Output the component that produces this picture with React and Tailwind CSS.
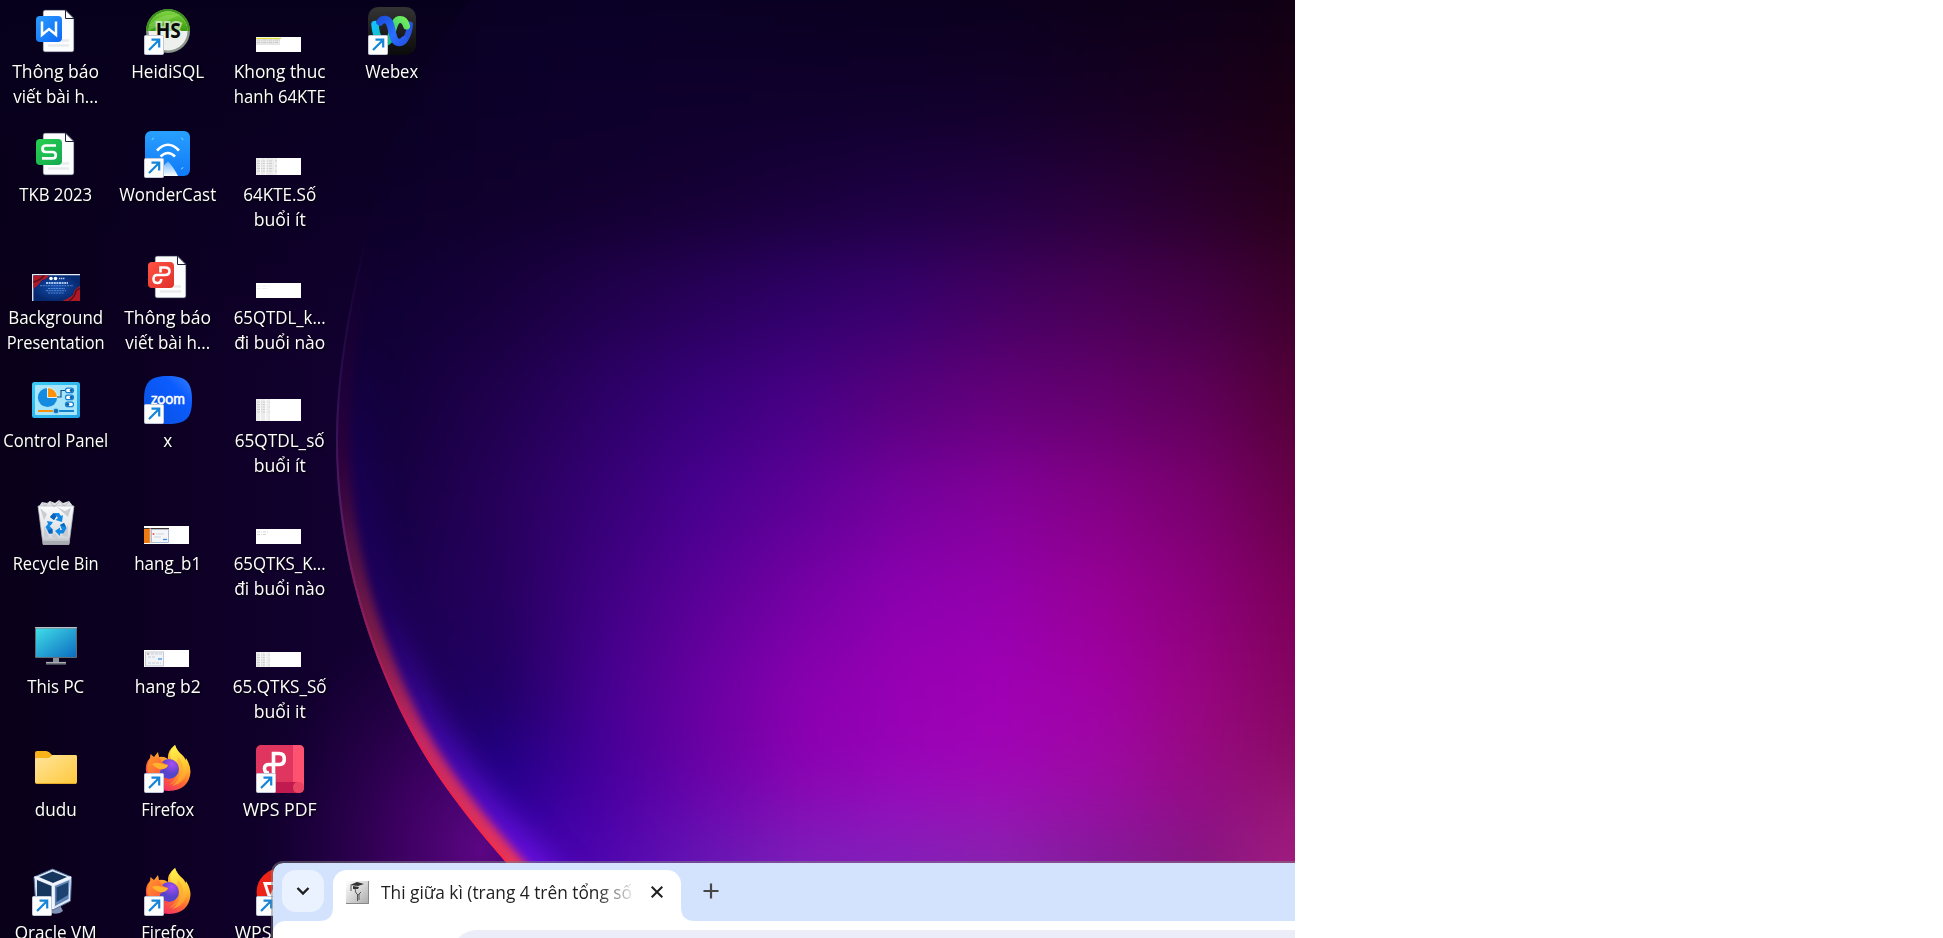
import React from "react";

/* Wallpaper colours: one row per height, one colour per horizontal position. */
const XS = [336, 400, 500, 600, 700, 800, 900, 1000, 1100, 1200, 1295];
const ROWS = [
  [0, ["#07001c", "#08001e", "#0a0024", "#0a0026", "#0a0024", "#0a0022", "#0a001f", "#0b001e", "#0c001a", "#0e0018", "#100014"]],
  [100, ["#090020", "#0a0023", "#0c002a", "#0d002c", "#0e002c", "#0f002c", "#10002c", "#12002a", "#150024", "#18001e", "#1a0014"]],
  [200, ["#0c0026", "#0d0029", "#0f002c", "#12002f", "#150034", "#19003c", "#1d0042", "#220042", "#28003a", "#28002a", "#26001a"]],
  [300, ["#100032", "#100034", "#17003c", "#20004c", "#28005a", "#2f0068", "#38006e", "#430062", "#480056", "#440046", "#3c002c"]],
  [400, ["#120040", "#14003c", "#20004e", "#2c0066", "#38007c", "#480086", "#58007e", "#64007a", "#64006e", "#60005a", "#540038"]],
  [500, ["#160050", "#180044", "#26005a", "#360076", "#480090", "#5e0098", "#76009e", "#84009a", "#840086", "#7a006e", "#680048"]],
  [600, ["#1a0058", "#1a0050", "#26005e", "#3e0082", "#5a0098", "#7600a4", "#8c00b0", "#9400ac", "#980096", "#8c007c", "#7c0058"]],
  [690, ["#1c0058", "#1c0058", "#200062", "#44008e", "#6800a0", "#8800b0", "#9800b4", "#a000b4", "#a000a4", "#980480", "#840460"]],
  [760, ["#200068", "#200068", "#200084", "#440098", "#6800a4", "#8a00b0", "#9802b8", "#a004b4", "#9e08a4", "#960a80", "#8a0c64"]],
  [820, ["#300080", "#300080", "#2c009c", "#4800a8", "#6808b0", "#8410b8", "#9214bc", "#9814b4", "#9410a0", "#900e88", "#981878"]],
  [862, ["#4008a8", "#4008a8", "#4404b4", "#5006b0", "#6418b4", "#7a20b8", "#8020b8", "#8424ac", "#801c98", "#841880", "#a41c80"]],
];

const EDGE = "M368 225 C350 300 336 370 336 440 C336 550 367 644 405 720 C435 780 480 835 545 906";

function Wallpaper() {
  return (
    <svg className="block h-full w-full" viewBox="0 0 1295 938" preserveAspectRatio="none">
      <defs>
        {ROWS.map(([y, cols]) => (
          <linearGradient key={y} id={`row${y}`} gradientUnits="userSpaceOnUse" x1="336" y1="0" x2="1295" y2="0">
            {cols.map((c, i) => <stop key={i} offset={(XS[i] - 336) / 959} stopColor={c} />)}
          </linearGradient>
        ))}
        <filter id="soft" x="-10%" y="-20%" width="120%" height="140%" colorInterpolationFilters="sRGB"><feGaussianBlur stdDeviation="12 36" /></filter>
        <filter id="b3" filterUnits="userSpaceOnUse" x="200" y="100" width="600" height="900" colorInterpolationFilters="sRGB"><feGaussianBlur stdDeviation="4" /></filter>
        <filter id="b12" filterUnits="userSpaceOnUse" x="200" y="100" width="600" height="900" colorInterpolationFilters="sRGB"><feGaussianBlur stdDeviation="14" /></filter>
        <linearGradient id="left" gradientUnits="userSpaceOnUse" x1="0" y1="0" x2="345" y2="0">
          <stop offset="0" stopColor="#090019" /><stop offset=".5" stopColor="#0d0024" /><stop offset="1" stopColor="#120030" />
        </linearGradient>
        <linearGradient id="leftTop" x1="0" y1="0" x2="0" y2="1">
          <stop offset="0" stopColor="#07001c" /><stop offset=".4" stopColor="#07001c" stopOpacity="0" />
        </linearGradient>
        <radialGradient id="glow" gradientUnits="userSpaceOnUse" cx="0" cy="0" r="1" gradientTransform="translate(480 850) scale(220 260)">
          <stop offset="0" stopColor="#5c0684" /><stop offset=".4" stopColor="#44006a" stopOpacity=".8" /><stop offset="1" stopColor="#2c0050" stopOpacity="0" />
        </radialGradient>
        <linearGradient id="rim" gradientUnits="userSpaceOnUse" x1="0" y1="230" x2="0" y2="864">
          <stop offset="0" stopColor="#241048" stopOpacity="0" /><stop offset=".25" stopColor="#2a0e50" /><stop offset=".45" stopColor="#541c64" /><stop offset=".65" stopColor="#9c1c58" /><stop offset=".8" stopColor="#e01c50" /><stop offset="1" stopColor="#fb2a40" />
        </linearGradient>
        <linearGradient id="band" gradientUnits="userSpaceOnUse" x1="0" y1="230" x2="0" y2="864">
          <stop offset="0" stopColor="#200030" stopOpacity="0" /><stop offset=".35" stopColor="#380030" stopOpacity=".6" /><stop offset=".5" stopColor="#601440" stopOpacity=".8" /><stop offset=".65" stopColor="#801c48" /><stop offset=".8" stopColor="#c42860" /><stop offset="1" stopColor="#e83458" />
        </linearGradient>
        <linearGradient id="halo" gradientUnits="userSpaceOnUse" x1="0" y1="350" x2="0" y2="864">
          <stop offset="0" stopColor="#140050" stopOpacity="0" /><stop offset=".5" stopColor="#200060" /><stop offset=".75" stopColor="#4008a8" /><stop offset="1" stopColor="#6a10e0" />
        </linearGradient>
        <clipPath id="disc"><path d="M470 0 C400 90 380 180 368 225 C350 300 336 370 336 440 C336 550 367 644 405 720 C435 780 480 835 545 906 L574 938 H1295 V0 Z" /></clipPath>
      </defs>
      <rect width="1295" height="938" fill="url(#left)" />
      <rect width="1295" height="938" fill="url(#leftTop)" />
      <rect x="230" y="580" width="400" height="358" fill="url(#glow)" />
      <g clipPath="url(#disc)">
        <g filter="url(#soft)">
          {ROWS.map(([y], i) => {
            const top = i === 0 ? -150 : (ROWS[i - 1][0] + y) / 2;
            const bottom = i === ROWS.length - 1 ? 1080 : (ROWS[i + 1][0] + y) / 2;
            return <rect key={y} x="200" y={top} width="1220" height={bottom - top + 0.5} fill={`url(#row${y})`} />;
          })}
        </g>
        <path d={EDGE} fill="none" stroke="url(#halo)" strokeWidth="68" filter="url(#b12)" />
        <path d={EDGE} fill="none" stroke="url(#band)" strokeWidth="28" filter="url(#b3)" />
        <path d={EDGE} fill="none" stroke="url(#rim)" strokeWidth="4" />
      </g>
    </svg>
  );
}

const Shortcut = () => (
  <g>
    <rect x="0.5" y="28.5" width="19" height="19" rx="1" fill="#fdfdfe" stroke="#c3c9d8" />
    <path d="M5 43 L14.5 33.5 M7.5 32.7 H15.2 V40.5" fill="none" stroke="#1485d8" strokeWidth="2.2" />
  </g>
);

const Svg = ({ children }) => <svg className="block h-12 w-12" viewBox="0 0 48 48">{children}</svg>;

function Page({ color, color2, id, children }) {
  return (
    <Svg>
      <defs><linearGradient id={id} x1="0" y1="0" x2="1" y2="1"><stop stopColor={color} /><stop offset="1" stopColor={color2} /></linearGradient></defs>
      <path d="M13 3 H34 L42 11 V43 a2 2 0 0 1 -2 2 H13 a2 2 0 0 1 -2 -2 V5 a2 2 0 0 1 2 -2z" fill="#fcfdfe" stroke="#2a2d48" strokeWidth=".7" />
      <path d="M33.5 3 V11.5 H42z" fill="#fff" stroke="#1c2038" strokeWidth="1" />
      <path d="M16 38.5 H37 M30 33.5 H37" stroke="#e8eaee" strokeWidth="2.6" />
      <rect x="4" y="9" width="26" height="26" rx="4" fill={`url(#${id})`} />
      {children}
    </Svg>
  );
}

const WordDoc = () => <Page id="wd" color="#2a9cff" color2="#0d68f6"><path d="M10 14.5 V27.8 L17 22 L24 27.8 V14.5" fill="none" stroke="#fff" strokeWidth="2.5" /></Page>;
const SheetDoc = () => <Page id="sd" color="#26d050" color2="#15a850"><path d="M24 15.5 H14 Q10.5 15.5 10.5 18.7 Q10.5 22 14 22 H20.5 Q23.8 22 23.8 25.2 Q23.8 28.4 20.5 28.4 H10" fill="none" stroke="#fff" strokeWidth="2.7" /></Page>;
const PdfDoc = () => <Page id="pd" color="#ff5344" color2="#df3029"><path d="M16.5 19.5 V14.5 H21 Q25.5 14.5 25.5 18.3 Q25.5 22 21 22 H13 Q9.5 22 9.5 26 Q9.5 30 13.5 30 Q17.2 30 17.2 26" fill="none" stroke="#fff" strokeWidth="2.6" /></Page>;

const Heidi = () => (
  <Svg>
    <defs><linearGradient id="hg" x1="0" y1="0" x2="0" y2="1"><stop stopColor="#7bd33c" /><stop offset="1" stopColor="#399911" /></linearGradient></defs>
    <circle cx="24" cy="24" r="22" fill="#8b958c" />
    <path d="M2 24 A22 22 0 0 1 46 24z" fill="#3b9415" />
    <circle cx="24" cy="24" r="19.5" fill="#edf0ed" />
    <path d="M4.5 24 A19.5 19.5 0 0 1 43.5 24z" fill="url(#hg)" />
    <path d="M6 17 Q17 6 35 8 Q22 14 4.5 24z" fill="#a5e36d" opacity=".4" />
    <text x="24.3" y="31.3" textAnchor="middle" textLength="25" lengthAdjust="spacingAndGlyphs" fontFamily="Open Sans, sans-serif" fontSize="21.5" fontWeight="700" fill="#0a0a0a" stroke="#e9f2e4" strokeOpacity=".7" strokeWidth="4" paintOrder="stroke">HS</text>
    <Shortcut />
  </Svg>
);

const WonderCast = () => (
  <Svg>
    <defs>
      <linearGradient id="wc" x1="0" y1="0" x2="0" y2="1"><stop stopColor="#27a0ff" /><stop offset="1" stopColor="#1179f8" /></linearGradient>
      <linearGradient id="wc2" x1="0" y1="0" x2="0" y2="1"><stop stopColor="#69b4ff" /><stop offset="1" stopColor="#fff" /></linearGradient>
    </defs>
    <rect x="1" y="1" width="45" height="45" rx="6" fill="url(#wc)" />
    <path d="M13 20.5 Q24 9 35 20.5 M16.5 26.5 Q24 19.5 31 26.5" fill="none" stroke="#fff" strokeWidth="2.6" />
    <path d="M24 31.5 Q29 36 34 46 H14 Q18 36 24 31.5z" fill="url(#wc2)" />
    <path d="M8 10 q0-2 2-2 M37 8 q2 0 2 2 M39 37 q0 2-2 2" fill="none" stroke="#8acbff" />
    <Shortcut />
  </Svg>
);

const Webex = () => (
  <Svg>
    <defs>
      <linearGradient id="wx" x1="0" y1="0" x2="0" y2="1"><stop stopColor="#343434" /><stop offset="1" stopColor="#0a0a0a" /></linearGradient>
      <linearGradient id="wx1" x1="0" y1="0" x2="1" y2="1"><stop stopColor="#12c3fa" /><stop offset="1" stopColor="#12b890" /></linearGradient>
      <linearGradient id="wx2" x1="0" y1="1" x2="1" y2="0"><stop stopColor="#0cb58c" /><stop offset="1" stopColor="#72ef5c" /></linearGradient>
      <linearGradient id="wx3" x1="0" y1="0" x2="1" y2="1"><stop stopColor="#1b50df" /><stop offset=".6" stopColor="#2b70ff" /><stop offset="1" stopColor="#2457e8" /></linearGradient>
    </defs>
    <rect width="48" height="48" rx="10" fill="url(#wx)" />
    <path d="M42 17.5 C41 28 37 35.5 31.5 35.5" fill="none" stroke="#2453dd" strokeWidth="6" strokeLinecap="round" />
    <path d="M17 35.5 C26 35.5 23 12.5 32 12.5 Q37 12.5 38.5 19" fill="none" stroke="url(#wx2)" strokeWidth="7" strokeLinecap="round" />
    <path d="M7 17.5 C8 28 11 35.5 17 35.5" fill="none" stroke="url(#wx1)" strokeWidth="7.5" strokeLinecap="round" />
    <path d="M12 15 Q14 12 17.5 12.5 C26 14 22 35.5 31 35.5 Q34 35.5 36 33" fill="none" stroke="url(#wx3)" strokeWidth="7.5" strokeLinecap="round" />
    <Shortcut />
  </Svg>
);

const Presentation = () => (
  <Svg>
    <defs><radialGradient id="bp"><stop stopColor="#1450b0" /><stop offset="1" stopColor="#06286e" /></radialGradient></defs>
    <g transform="translate(0 2)">
      <rect y="19" width="48" height="27" fill="url(#bp)" />
      <path d="M0.7 46 V19.7 H48" fill="none" stroke="#e8edf5" strokeWidth="1.3" />
      <path d="M1.4 20.4 H17 Q15 24 10 25 Q7 30 1.4 34z M48 31 Q42 34 41 40 Q36 44 30 46 H48z" fill="#b01825" />
      <path d="M1.4 27 Q9 25 12 20.4 M37 46 Q43 42 44 36 L48 33" stroke="#5d0d1d" fill="none" strokeWidth="1.5" />
      <circle cx="19" cy="23.5" r="1.8" fill="#fff" /><circle cx="23.5" cy="23.5" r="1.8" fill="#fff" />
      <path d="M27 23.5 H33" stroke="#b9d1f4" strokeWidth="1.6" strokeDasharray="1.4 .6" />
      <path d="M14 28 H36" stroke="#a9c6f0" strokeWidth="1.8" strokeDasharray="2 .6" />
      <path d="M8 30.7 H41 M16 33.5 H33 M14 35.7 H34 M16 38 H32" stroke="#6a98de" strokeWidth=".8" strokeDasharray="2 .7" />
    </g>
  </Svg>
);

const ControlPanel = () => (
  <Svg>
    <defs><linearGradient id="cp" x1="0" y1="0" x2="1" y2="1"><stop stopColor="#3ccbf5" /><stop offset="1" stopColor="#20a4e6" /></linearGradient></defs>
    <rect y="6" width="48" height="36" rx="2.5" fill="url(#cp)" />
    <rect x="3" y="9" width="42" height="30" rx="1" fill="#a6e5fa" />
    <circle cx="15.5" cy="21.5" r="9.6" fill="#148be0" />
    <path d="M15.5 21.5 V11.5 A10 10 0 0 1 25.5 21.5z" fill="#ff920b" stroke="#d9f5fc" strokeWidth="1" />
    <path d="M25 21 H29 V14.5 H34" fill="none" stroke="#14538e" strokeWidth="1.2" />
    <g fill="#fff" stroke="#1680d0" strokeWidth="1.2"><rect x="33.5" y="12.2" width="8" height="4.4" rx="2.2" /><rect x="33.5" y="19.2" width="8" height="4.4" rx="2.2" /><rect x="33.5" y="26.2" width="8" height="4.4" rx="2.2" /></g>
    <circle cx="39.4" cy="14.4" r="1.7" fill="#0966ad" /><circle cx="39.4" cy="21.4" r="1.7" fill="#0966ad" /><circle cx="35.6" cy="28.4" r="1.7" fill="#0966ad" />
    <path d="M6 35 H23" stroke="#f4900b" strokeWidth="2" /><path d="M24 35 H42" stroke="#1583cf" strokeWidth="2" />
    <circle cx="24" cy="35" r="2.8" fill="#1470bb" stroke="#8ed9f5" />
  </Svg>
);

const Zoom = () => (
  <Svg>
    <defs><linearGradient id="zm" x1="1" y1="0" x2="0" y2="1"><stop stopColor="#3a7fff" /><stop offset=".3" stopColor="#0b5cff" /><stop offset="1" stopColor="#0a50dc" /></linearGradient></defs>
    <path d="M24 0 C42 0 48 6 48 24 C48 42 42 48 24 48 C6 48 0 42 0 24 C0 6 6 0 24 0z" fill="url(#zm)" />
    <text x="24" y="28" textAnchor="middle" textLength="34" lengthAdjust="spacingAndGlyphs" fontFamily="Lato, sans-serif" fontWeight="400" fontSize="15" fill="#fff" stroke="#fff" strokeWidth=".5">zoom</text>
    <Shortcut />
  </Svg>
);

const Bin = () => (
  <Svg>
    <defs><linearGradient id="rb" x1="0" y1="0" x2="0" y2="1"><stop stopColor="#fafbfc" /><stop offset=".8" stopColor="#d8dbdf" /><stop offset="1" stopColor="#a9adb1" /></linearGradient></defs>
    <path d="M7 7 L10 3 L15 4 L18 2 L23 4 L27 1 L31 4 L37 2 L41 7 L37 10 H11z" fill="#dddfe3" />
    <path d="M6 7 H42 L37 45.5 H11z" fill="url(#rb)" stroke="#b6babf" strokeWidth=".7" />
    <path d="M8 9 L15 15 L12 21z M25 8 L33 12 L39 9 L36 18z M12 27 L17 38 L12 39z M36 26 L30 37 L36 38z M19 37 L23 34 L28 42z" fill="#c9cdd2" />
    <path d="M10 3 L13 7 L18 2 L22 8 L28 2 L32 7 L37 3" fill="none" stroke="#aeb3b9" strokeWidth=".8" />
    <path d="M11 42 H37.5 L37 45.5 H11.3z" fill="#a8acb0" />
    <g fill="#1288e4">
      <path d="M18 18 L20.5 15 Q22 13.5 24 14 H27 L29 17 L31 16 L30 23 L23.5 21 L26 19 L24.5 17 L22 21z" />
      <path d="M15 22 L21 23 L19 26 L17.5 27 L20.5 30 V34.5 H17 L13.5 28 L16 25z" />
      <path d="M28 26 L32 24 L34.5 29 L31.5 34.5 H28 V37 L23 32 L28 28.5 V31 H30z" />
    </g>
    <path d="M18 18 L22 21 L24.5 17 L21.5 14z M16 31 L20.5 30 V34.5 H17z M28 26 L32 24 L34 28z" fill="#0c62b8" />
  </Svg>
);

const ThisPC = () => (
  <Svg>
    <defs><linearGradient id="pc" x1="0" y1="0" x2="1" y2="1"><stop stopColor="#3fdde8" /><stop offset="1" stopColor="#0d6cc0" /></linearGradient></defs>
    <rect x="3" y="5" width="42" height="31" rx="1" fill="#646a70" />
    <rect x="4" y="6.5" width="40" height="28.5" fill="url(#pc)" />
    <path d="M3.2 5.6 H44.8" stroke="#bbc2c7" strokeWidth="1.2" />
    <path d="M21 36 H27 V40 H21z" fill="#8a9198" /><path d="M14 40 H34 V42.6 H14z" fill="#6e757b" /><path d="M14 40.4 H34" stroke="#aeb4b9" />
  </Svg>
);

const Folder = () => (
  <Svg>
    <defs><linearGradient id="fd" x1="0" y1="0" x2="1" y2="1"><stop stopColor="#ffe49b" /><stop offset="1" stopColor="#ffc93c" /></linearGradient></defs>
    <path d="M3 36 V8 Q3 6 5 6 H14 Q16 6 17.5 7.5 L20 10 H43 Q45 10 45 12 V30z" fill="#f8b31b" />
    <path d="M3 15 Q3 13 5 13 H15.5 Q17.5 13 19 11.5 L20.5 10 H43.5 Q45 10 45 12 V37 Q45 39 43 39 H5 Q3 39 3 37z" fill="url(#fd)" />
    <path d="M4 38.5 H44" stroke="#e6ac26" />
  </Svg>
);

const Firefox = () => (
  <Svg>
    <defs>
      <linearGradient id="ff" x1=".85" y1="0" x2=".25" y2="1"><stop stopColor="#fff44f" /><stop offset=".3" stopColor="#ffc12c" /><stop offset=".6" stopColor="#ff6d30" /><stop offset="1" stopColor="#f01f72" /></linearGradient>
      <radialGradient id="ff2" cx=".65" cy=".25"><stop stopColor="#a94df2" /><stop offset="1" stopColor="#5644cb" /></radialGradient>
      <linearGradient id="ff3" x1="0" y1="0" x2="1" y2="1"><stop stopColor="#ff9a25" /><stop offset="1" stopColor="#ff3d4b" /></linearGradient>
      <linearGradient id="ff4" x1=".4" y1="0" x2=".6" y2="1"><stop stopColor="#fff04c" /><stop offset=".55" stopColor="#ffc933" /><stop offset="1" stopColor="#ff8a30" /></linearGradient>
    </defs>
    <path d="M31 0 Q33 6 38 10 Q41 12 41.5 15 L42 13 Q46.5 20 46.5 27 Q45 45 25 46 Q4 45 2 26 Q1 18 6 13 L6.5 9 L10 12 L14 7 L15 12 Q20 11 24 14 Q23 6 31 0z" fill="url(#ff)" />
    <path d="M31 0 Q33 6 38 10 Q45 18 43 28 Q39 39 28 41 Q38 34 35 23 Q33 16 27 14 Q24 7 31 0z" fill="url(#ff4)" />
    <path d="M34 12 Q42 20 38 30 Q34 38 25 40 Q35 33 32 22z" fill="#ffa02e" opacity=".5" />
    <circle cx="25" cy="24" r="10" fill="url(#ff2)" />
    <path d="M15 12 L17 16 Q20 19 24 20 Q23 23 19 24 Q15 25 16 29 Q18 33 24 34 Q21 37 15 37 Q6 34 3 24 Q4 16 7 13 Q11 13 15 12z" fill="url(#ff3)" />
    <path d="M8 19 Q13 17 17 18.5 L24 20 Q23 23.5 19 24 Q13 25 8 19z" fill="#ffb42b" />
    <Shortcut />
  </Svg>
);

const WpsPdf = () => (
  <Svg>
    <rect width="48" height="48" rx="5" fill="#e0355f" />
    <path d="M37 0 H43 Q48 0 48 5 V42 H37z" fill="#ff5170" />
    <path d="M0 37 H42 V48 H5 Q0 48 0 43z" fill="#c11a50" />
    <path d="M42 37 Q48 37 48 42.5 Q48 48 42.5 48 Q37 48 37 42.5 Q37 37 42 37z" fill="#e94463" />
    <path d="M17.5 29 V8.5 H23 Q28.3 8.5 28.3 14 Q28.3 19.5 23 19.5 H13 Q8.5 19.5 8.5 23.5 Q8.5 28 13 28" fill="none" stroke="#fff" strokeWidth="3.6" />
    <Shortcut />
  </Svg>
);

const WpsOffice = () => (
  <Svg>
    <circle cx="24" cy="24" r="23.5" fill="#ee2419" />
    <path d="M9 15.5 L14 31 L20 18 L25 31 L32 15.5z" fill="none" stroke="#fff" strokeWidth="3" />
    <Shortcut />
  </Svg>
);

const VBox = () => (
  <Svg>
    <path d="M23 34 Q30 34 29 39 L31 43 Q27 47 19 45z" fill="#8093b7" />
    <path d="M2 9 L20.5 1 L39.5 9 L38.5 33 L21 42 L3.5 33z" fill="#dce6f4" stroke="#4f6b99" strokeWidth="1" />
    <path d="M7 9 L20.5 3.5 L35 9 L21 15z M5 12 L19.5 18 V38 L5 30.5z" fill="#17365e" />
    <path d="M23 18 L37.5 12 L36.5 31 L23 38z" fill="#5d82b4" />
    <path d="M24.5 19.5 L36 14.5 V27 L24.5 34z" fill="#1d4170" />
    <path d="M2.5 9 L21 16.5 L39 9 M21 16.5 V41" stroke="#f1f6fc" strokeWidth="2" fill="none" />
    <Shortcut />
  </Svg>
);

/* Picture-file previews: white sheets with faint table marks at the left. */
function Sheet({ h, w, top, color = "#b4b4b4", accent, dense }) {
  return (
    <Svg>
      <g transform={`translate(0 ${top})`}>
        <rect width="45" height={h} fill="#fff" />
        {dense && <rect width={w} height={h} fill="#e6e6e6" opacity=".75" />}
        {accent && <rect y="2" width={w - 1} height="6" fill="#dcdcdc" opacity=".7" />}
        <path d={`M1 3 H${w} M1 5.5 H${w - 2}${dense ? ` M1 8 H${w} M1 10.5 H${w - 2} M1 13 H${w}` : ""}`} stroke={color} strokeWidth="1" strokeDasharray="3 1 1 1" opacity=".55" />
        {dense && <path d={`M4.5 0 V${h} M9.5 0 V${h} M${w - 3} 0 V${h}`} stroke="#fff" strokeWidth=".8" />}
        {accent && <path d={`M0 1.4 H${w}`} stroke="#e3df3d" strokeWidth="1.2" />}
      </g>
    </Svg>
  );
}

const Hang1 = () => (
  <Svg>
    <g transform="translate(0 -1)">
      <rect y="28" width="45" height="18" fill="#fff" /><rect y="30" width="6" height="15" fill="#ee7912" />
      <path d="M0 30.5 H25" stroke="#44342e" strokeWidth="1" /><path d="M6 30 V45" stroke="#d6a783" strokeWidth="1" />
      <rect x="7.5" y="31.5" width="17" height="13" fill="#f5f6fa" stroke="#9faec5" strokeWidth=".8" />
      <circle cx="9.5" cy="36" r="1" fill="#ef5548" /><path d="M12 36 H20 M10 39 H17" stroke="#cdd2da" /><path d="M19 41.5 H23" stroke="#378df0" strokeWidth="1.3" />
    </g>
  </Svg>
);
const Hang2 = () => (
  <Svg>
    <g transform="translate(0 -1)">
      <rect y="29" width="45" height="17" fill="#fff" /><rect x="1.5" y="31" width="18" height="14" fill="#f2f3f7" stroke="#b8bdc7" strokeWidth=".8" />
      <path d="M3 33 H18 M4 36 H12 M4 42 H17" stroke="#c7ccd5" strokeDasharray="3 1" /><path d="M14 38 H18" stroke="#4c96ef" strokeWidth="1.4" /><circle cx="4" cy="33" r=".8" fill="#e2645d" />
    </g>
  </Svg>
);

const COLUMNS = [
  [
    [<WordDoc />, ["Thông báo", "viết bài h..."]],
    [<SheetDoc />, ["TKB 2023"]],
    [<Presentation />, ["Background", "Presentation"]],
    [<ControlPanel />, ["Control Panel"]],
    [<Bin />, ["Recycle Bin"]],
    [<ThisPC />, ["This PC"]],
    [<Folder />, ["dudu"]],
    [<VBox />, ["Oracle VM"]],
  ],
  [
    [<Heidi />, ["HeidiSQL"]],
    [<WonderCast />, ["WonderCast"]],
    [<PdfDoc />, ["Thông báo", "viết bài h..."]],
    [<Zoom />, ["x"]],
    [<Hang1 />, ["hang_b1"]],
    [<Hang2 />, ["hang b2"]],
    [<Firefox />, ["Firefox"]],
    [<Firefox />, ["Firefox"]],
  ],
  [
    [<Sheet top={30} h={15} w={25} accent />, ["Khong thuc", "hanh 64KTE"]],
    [<Sheet top={28} h={17} w={21} dense />, ["64KTE.Số", "buổi ít"]],
    [<Sheet top={30} h={15} w={14} color="#dcdcdc" />, ["65QTDL_k...", "đi buổi nào"]],
    [<Sheet top={23} h={22} w={14} dense />, ["65QTDL_số", "buổi ít"]],
    [<Sheet top={30} h={15} w={13} />, ["65QTKS_K...", "đi buổi nào"]],
    [<Sheet top={30} h={15} w={14} dense />, ["65.QTKS_Số", "buổi it"]],
    [<WpsPdf />, ["WPS PDF"]],
    [<WpsOffice />, ["WPS Office"]],
  ],
  [[<Webex />, ["Webex"]]],
];

/* Rendered label widths in pixels. */
const WIDTHS = {
  "Thông báo": 87, "viết bài h...": 85, "TKB 2023": 73, Background: 95, Presentation: 98, "Control Panel": 105,
  "Recycle Bin": 86, "This PC": 57, dudu: 42, "Oracle VM": 82, HeidiSQL: 73, WonderCast: 97, x: 9, hang_b1: 67,
  "hang b2": 66, Firefox: 53, "Khong thuc": 92, "hanh 64KTE": 92, "64KTE.Số": 73, "buổi ít": 52, "65QTDL_k...": 92,
  "đi buổi nào": 91, "65QTDL_số": 90, "65QTKS_K...": 92, "65.QTKS_Số": 94, "buổi it": 52, "WPS PDF": 74,
  "WPS Office": 90, Webex: 53,
};

function Label({ text }) {
  const w = WIDTHS[text];
  return (
    <svg className="block h-[25px] w-28 overflow-visible drop-shadow-[1px_1px_1px_#000]" viewBox="0 0 112 25">
      <text x="55.7" y="18.5" textAnchor="middle" textLength={w} lengthAdjust="spacingAndGlyphs" className="fill-white font-['Open_Sans','Noto_Sans',sans-serif] text-[17.8px]">{text}</text>
    </svg>
  );
}

function Browser() {
  return (
    <div className="absolute top-[861px] left-[271px] flex h-[77px] w-[1024px] flex-col overflow-hidden rounded-tl-xl border-t-2 border-l-2 border-[#80808080] bg-[#d3e3fd] bg-clip-padding">
      <div className="flex h-[58px] shrink-0 pl-[9px]">
        <div className="mt-[7px] flex size-[42px] items-center justify-center rounded-[14px] bg-[#ebf2ff]">
          <svg className="size-4" viewBox="0 0 16 16"><path d="M2.5 5 L8 10.5 L13.5 5" fill="none" stroke="#1f1f1f" strokeWidth="2.4" /></svg>
        </div>
        <svg className="mt-auto -ml-[5px] block h-[14px] w-[14px]" viewBox="0 0 14 14"><path d="M14 0 V14 H0 Q14 14 14 0" fill="#fff" /></svg>
        <div className="mt-[7px] flex w-[348px] items-center rounded-t-[14px] bg-white pr-[18px] pb-[7px] pl-[13px]">
          <svg className="size-[23px] shrink-0" viewBox="0 0 23 23">
            <defs><linearGradient id="fav" x1="0" y1="0" x2="1" y2="1"><stop stopColor="#fff" /><stop offset="1" stopColor="#aaa" /></linearGradient></defs>
            <rect width="23" height="23" fill="url(#fav)" /><path d="M0 22.5 H22.5 V0" fill="none" stroke="#888" />
            <path d="M4 4 L11 1 L18 3 L12 5z M7 5 L13 6 L12 8 H7z" fill="#333" /><path d="M5 4 V10" stroke="#555" strokeWidth="1" />
            <path d="M9 8 L10 12 L12 14 L15 11 M11.5 13 V20 M13 13 V19" fill="none" stroke="#555" strokeWidth="1" />
          </svg>
          <svg className="ml-3 block h-8 w-[252px] shrink-0 overflow-hidden [mask-image:linear-gradient(to_right,black_215px,transparent_256px)]" viewBox="0 0 252 32">
            <text x="0" y="23" textLength="251" lengthAdjust="spacingAndGlyphs" className="fill-[#1f1f1f] font-['Open_Sans','Noto_Sans',sans-serif] text-[18px]">Thi giữa kì (trang 4 trên tổng số</text>
          </svg>
          <svg className="ml-auto size-3 shrink-0" viewBox="0 0 12 12"><path d="M.7 .7 L11.3 11.3 M11.3 .7 L.7 11.3" stroke="#1f1f1f" strokeWidth="2" /></svg>
        </div>
        <svg className="mt-auto block h-[14px] w-4" viewBox="0 0 16 14"><path d="M0 0 V14 H14 Q0 14 0 0" fill="#fff" /></svg>
        <svg className="mt-[20px] ml-[6px] block size-4" viewBox="0 0 16 16"><path d="M8 .5 V15.5 M.5 8 H15.5" stroke="#474747" strokeWidth="2.2" /></svg>
      </div>
      <div className="grow rounded-tl-xl bg-white pt-[9px] pl-[178px]">
        <div className="h-12 rounded-tl-[26px] bg-[#ebeef8]" />
      </div>
    </div>
  );
}

export default function App() {
  return (
    <div className="h-[938px] w-full overflow-hidden bg-white">
      <main className="relative h-[938px] w-[1295px] overflow-hidden bg-[#0a001e]">
        <div className="absolute inset-0"><Wallpaper /></div>
        <div className="relative flex">
          {COLUMNS.map((items, c) => (
            <div key={c} className="flex w-28 flex-col">
              {items.map(([icon, lines], i) => (
                <div key={i} className="flex h-[123px] flex-col items-center pt-[7px]">
                  {icon}
                  <div className="mt-1 flex flex-col">
                    {lines.map((line) => <Label key={line} text={line} />)}
                  </div>
                </div>
              ))}
            </div>
          ))}
        </div>
        <Browser />
      </main>
    </div>
  );
}
